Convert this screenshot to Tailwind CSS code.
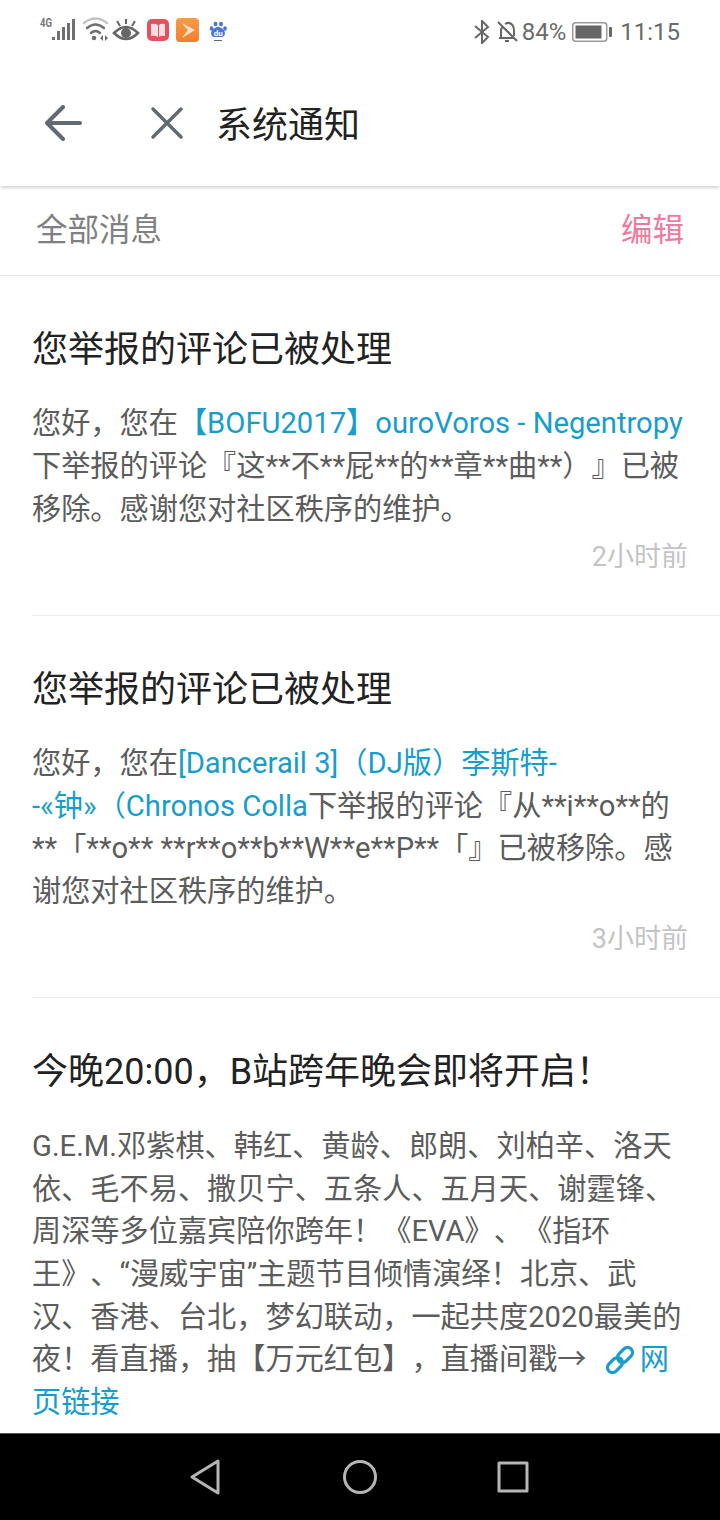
<!DOCTYPE html>
<html lang="zh-CN">
  <head>
    <meta charset="UTF-8" />
    <title>系统通知</title>
    <script src="https://cdn.jsdelivr.net/npm/@tailwindcss/browser@4"></script>
  </head>
  <body class="bg-white font-['Roboto','Noto_Sans_CJK_SC',sans-serif] [text-spacing-trim:space-all]">
    <div class="w-[720px] h-[1520px] flex flex-col overflow-hidden">
      <!-- status bar -->
      <div class="h-[60px] shrink-0 flex items-center justify-between pl-[40px] pr-[40px] text-[#666]">
        <div class="flex items-center h-[30px]">
          <svg width="190" height="30" viewBox="0 0 190 30">
            <text x="0" y="12" font-size="12" font-weight="700" fill="#777" font-family="Roboto" textLength="12" lengthAdjust="spacingAndGlyphs">4G</text>
            <g fill="#707070">
              <rect x="12" y="22" width="3" height="3" />
              <rect x="17" y="16" width="3" height="9" />
              <rect x="22" y="12" width="3" height="13" />
              <rect x="27" y="8" width="3" height="17" />
              <rect x="32" y="4" width="3" height="21" />
            </g>
            <g fill="none" stroke="#707070" stroke-width="2.4" stroke-linecap="round">
              <path d="M44 8 Q55.500 -1 67 8" stroke="#c4c4c4" />
              <path d="M47 13 Q55.500 6 64 13" />
              <path d="M51 18 Q55.500 14 60 18" />
            </g>
            <circle cx="54" cy="23" r="2.300" fill="#707070" />
            <path d="M63 20l-3 3 3 3zM65 20v6l3-3z" fill="#707070" />
            <path d="M74 18 Q86 6 98 18 Q86 30 74 18Z" fill="none" stroke="#666" stroke-width="2.500" />
            <circle cx="86" cy="18" r="5" fill="#666" />
            <path d="M77 6l3 5M86 4v5M95 6l-3 5" stroke="#666" stroke-width="2" />
            <rect x="107" y="4" width="22" height="22" rx="5" fill="#e9505f" />
            <path d="M111 9q4-1 7 1v12q-3-2-7-1zM125 9q-4-1-6 1v12q2-2 6-1z" fill="#fbdfe2" />
            <defs>
              <linearGradient id="orange" x1="0" y1="0" x2="0" y2="1">
                <stop offset="0" stop-color="#f79c45" />
                <stop offset="1" stop-color="#f47e2c" />
              </linearGradient>
            </defs>
            <rect x="136" y="3" width="23" height="24" rx="4" fill="url(#orange)" />
            <path d="M142 8l13 7-13 8 3-4 3-4-3-3z" fill="#fde3cc" />
            <g fill="#4a74d6">
              <ellipse cx="175.500" cy="9" rx="2" ry="2.300" />
              <ellipse cx="181" cy="9" rx="2" ry="2.300" />
              <ellipse cx="171.500" cy="13.500" rx="1.800" ry="2.300" />
              <ellipse cx="185" cy="13.500" rx="1.800" ry="2.300" />
              <path d="M178 11.500q6 2 7 6q0 4.500-4 4.500h-6q-4 0-4-4.500q1-4 7-6z" />
            </g>
            <text x="178.200" y="21" font-size="8" font-weight="700" fill="#fff" font-family="Roboto" text-anchor="middle">du</text>
            <rect x="174" y="25" width="8" height="1" fill="#666" />
          </svg>
        </div>
        <div class="flex items-center pt-[4px] text-[24px] text-[#6a6a6a]">
          <svg class="mr-[7px]" width="16" height="24" viewBox="0 0 16 24" fill="none" stroke="#666" stroke-width="2">
            <path d="M1 6l13 11-6 6V1l6 6L1 18" />
          </svg>
          <svg class="mr-[4px]" width="21" height="24" viewBox="0 0 21 24" fill="none" stroke="#666" stroke-width="2">
            <path d="M4 18V11q0-3 2-5M8 4q5-3 8 2q1 2 1 5v5M2 18h14M1 2l19 19M8 21h4" />
          </svg>
          <span>84%</span>
          <svg class="ml-[6px] mr-[7px]" width="41" height="20" viewBox="0 0 41 20">
            <rect x="0.750" y="0.750" width="34" height="18.500" rx="3" fill="none" stroke="#999" stroke-width="1.500" />
            <rect x="3.500" y="3.500" width="26" height="13" fill="#666" />
            <rect x="37" y="5" width="3" height="10" rx="1" fill="#666" />
          </svg>
          <span>11:15</span>
        </div>
      </div>

      <!-- header -->
      <div class="h-[126px] shrink-0 flex items-center shadow-[0_3px_3px_-1px_rgba(0,0,0,0.18)] relative z-10 bg-white">
        <svg class="ml-[44px]" width="38" height="36" viewBox="0 0 38 36" fill="none" stroke="#636970" stroke-width="4" stroke-linecap="round" stroke-linejoin="round">
          <path d="M19 2L3 18l16 16M3 18h33" />
        </svg>
        <svg class="ml-[68px]" width="34" height="34" viewBox="0 0 34 34" fill="none" stroke="#636970" stroke-width="3.500" stroke-linecap="round">
          <path d="M3 3l28 28M31 3L3 31" />
        </svg>
        <h1 class="ml-[32px] pt-[6px] text-[36px] leading-none text-[#222]">系统通知</h1>
      </div>

      <!-- filter row -->
      <div class="h-[90px] shrink-0 flex items-center justify-between pl-[36px] pr-[36px] border-b border-[#e8e8e8] text-[31.5px]">
        <span class="text-[#808080]">全部消息</span>
        <span class="text-[#ef7a9c]">编辑</span>
      </div>

      <!-- messages -->
      <div class="flex-1 min-h-0 overflow-hidden">
        <article class="ml-[32px] pt-[49px] pb-[39px] border-b border-[#eeeeee]">
          <h2 class="text-[36px] leading-[50px] text-[#222]">您举报的评论已被处理</h2>
          <p class="mt-[27px] text-[29.2px] leading-[43px] text-[#5c5c5c] whitespace-nowrap">
            您好，您在<span class="text-[#179dcc]">【BOFU2017】ouroVoros - Negentropy</span><br />
            下举报的评论『这**不**屁**的**章**曲**）』已被<br />
            移除。感谢您对社区秩序的维护。
          </p>
          <div class="mt-[7px] pr-[32px] text-right text-[27px] leading-[38px] text-[#c4c4c4]">2小时前</div>
        </article>

        <article class="ml-[32px] pt-[49px] pb-[39px] border-b border-[#eeeeee]">
          <h2 class="text-[36px] leading-[50px] text-[#222]">您举报的评论已被处理</h2>
          <p class="mt-[27px] text-[29.2px] leading-[42.7px] text-[#5c5c5c] whitespace-nowrap">
            您好，您在<span class="text-[#179dcc]">[Dancerail 3]（DJ版）李斯特-</span><br />
            <span class="text-[#179dcc]">-«钟»（Chronos Colla</span>下举报的评论『从**i**o**的<br />
            **「**o** **r**o**b**W**e**P**「』已被移除。感<br />
            谢您对社区秩序的维护。
          </p>
          <div class="mt-[7px] pr-[32px] text-right text-[27px] leading-[38px] text-[#c4c4c4]">3小时前</div>
        </article>

        <article class="ml-[32px] pt-[49px]">
          <h2 class="text-[36px] leading-[50px] text-[#222]">今晚20:00，B站跨年晚会即将开启！</h2>
          <p class="mt-[28px] text-[29.2px] leading-[42.7px] text-[#5c5c5c] whitespace-nowrap">
            G.E.M.邓紫棋、韩红、黄龄、郎朗、刘柏辛、洛天<br />
            依、毛不易、撒贝宁、五条人、五月天、谢霆锋、<br />
            周深等多位嘉宾陪你跨年！《EVA》、《指环<br />
            王》、“漫威宇宙”主题节目倾情演绎！北京、武<br />
            汉、香港、台北，梦幻联动，一起共度2020最美的<br />
            夜！看直播，抽【万元红包】，直播间戳→
            <span class="text-[#179dcc]"><svg class="inline-block align-[-5px] mr-[6px] ml-[12px]" width="28" height="28" viewBox="0 0 28 28" fill="none" stroke="#179dcc" stroke-width="3.200">
                <rect x="-8.500" y="-5" width="17" height="10" rx="5" transform="translate(9 19) rotate(-45)" />
                <rect x="-8.500" y="-5" width="17" height="10" rx="5" transform="translate(19 9) rotate(-45)" />
              </svg>网<br />页链接</span>
          </p>
        </article>
      </div>

      <!-- nav bar -->
      <div class="h-[87px] shrink-0 bg-black border-t border-[#555] flex items-center">
        <svg class="ml-[190px]" width="30" height="36" viewBox="0 0 30 36" fill="none" stroke="#b5b5b5" stroke-width="3" stroke-linejoin="round">
          <path d="M28 2v32L2 18z" />
        </svg>
        <svg class="ml-[123px]" width="34" height="34" viewBox="0 0 34 34" fill="none" stroke="#b5b5b5" stroke-width="3">
          <circle cx="17" cy="17" r="15.500" />
        </svg>
        <svg class="ml-[120px]" width="32" height="32" viewBox="0 0 32 32" fill="none" stroke="#b5b5b5" stroke-width="3" stroke-linejoin="round">
          <rect x="2" y="2" width="28" height="28" />
        </svg>
      </div>
    </div>
  </body>
</html>
